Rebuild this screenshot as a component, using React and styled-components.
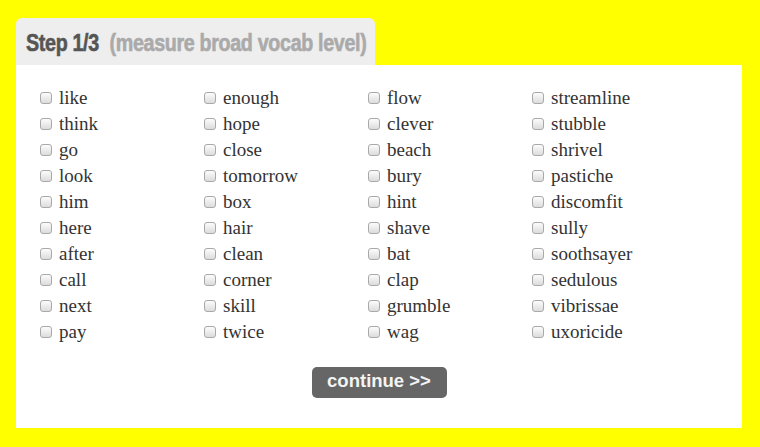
import React from "react";
import styled, { createGlobalStyle } from "styled-components";

const GlobalStyle = createGlobalStyle`
  html, body {
    margin: 0;
    padding: 0;
    background: #ffff00;
  }
  body {
    padding: 18px 16px 0;
  }
`;

const Wrapper = styled.div`
  width: 726px;
`;

const Tab = styled.div`
  width: 359px;
  height: 47px;
  box-sizing: border-box;
  background: #eeeeee;
  border-radius: 6px 6px 0 0;
  padding: 2px 10px 0;
  display: flex;
  align-items: center;
  white-space: nowrap;
`;

// condensed, heavy headline look
const TabTitle = styled.div`
  display: flex;
  gap: 13px;
  transform: scaleX(0.82);
  transform-origin: left center;
  font-family: "Liberation Sans", Arial, sans-serif;
  font-weight: bold;
  font-size: 24px;
  letter-spacing: -0.4px;
  -webkit-text-stroke: 0.6px currentColor;
`;

const StepLabel = styled.span`
  color: #555555;
`;

const StepHint = styled.span`
  color: #aaaaaa;
`;

const Panel = styled.div`
  background: #ffffff;
  padding: 20px 24px 30px;
`;

const WordGrid = styled.div`
  display: grid;
  grid-template-columns: repeat(4, 164px);
  grid-template-rows: repeat(10, 26px);
  grid-auto-flow: column;
`;

const Word = styled.label`
  display: flex;
  align-items: center;
  gap: 7px;
  font-family: "Liberation Serif", serif;
  font-size: 19px;
  color: #333333;
`;

const Box = styled.input.attrs({ type: "checkbox" })`
  appearance: none;
  margin: 0;
  width: 12px;
  height: 12px;
  border: 1px solid #a9a9a9;
  border-radius: 3px;
  background: linear-gradient(#fcfcfc, #dcdcdc);
  flex-shrink: 0;
  &:checked {
    background: #777;
  }
`;

const Actions = styled.div`
  display: flex;
  justify-content: center;
  margin-top: 22px;
`;

const ContinueButton = styled.button`
  width: 135px;
  height: 31px;
  border: none;
  border-radius: 5px;
  background: #666666;
  color: #f4f4f4;
  font-family: "Liberation Sans", Arial, sans-serif;
  font-weight: bold;
  font-size: 18.5px;
  padding: 0 0 3px;
  cursor: pointer;
`;

const words = [
  "like", "think", "go", "look", "him", "here", "after", "call", "next", "pay",
  "enough", "hope", "close", "tomorrow", "box", "hair", "clean", "corner", "skill", "twice",
  "flow", "clever", "beach", "bury", "hint", "shave", "bat", "clap", "grumble", "wag",
  "streamline", "stubble", "shrivel", "pastiche", "discomfit", "sully", "soothsayer", "sedulous", "vibrissae", "uxoricide",
];

export default function App() {
  return (
    <>
      <GlobalStyle />
      <Wrapper>
        <Tab>
          <TabTitle>
            <StepLabel>Step 1/3</StepLabel>
            <StepHint>(measure broad vocab level)</StepHint>
          </TabTitle>
        </Tab>
        <Panel>
          <WordGrid>
            {words.map((w) => (
              <Word key={w}>
                <Box />
                {w}
              </Word>
            ))}
          </WordGrid>
          <Actions>
            <ContinueButton>continue &gt;&gt;</ContinueButton>
          </Actions>
        </Panel>
      </Wrapper>
    </>
  );
}
